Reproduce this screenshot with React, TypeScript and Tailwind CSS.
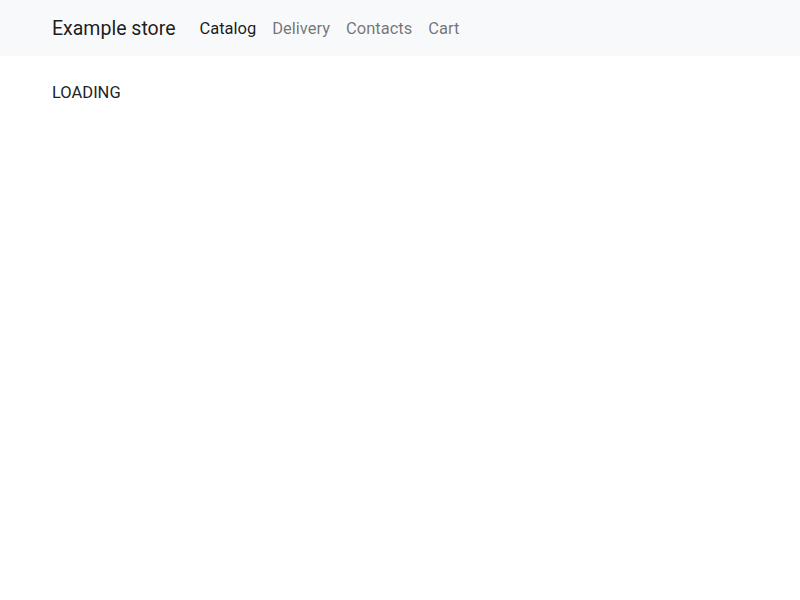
export default function App() {
  return (
    <div className="min-h-[600px] bg-white text-[#212529]" style={{ fontFamily: "Roboto, 'Liberation Sans', sans-serif" }}>
      <nav className="bg-[#f8f9fa] h-[56px] flex items-center">
        <div className="w-[720px] mx-auto px-3 flex items-center pt-[2px]">
          <a className="text-[19.5px] leading-[30px] mr-4 text-black/90">Example store</a>
          <ul className="flex items-center">
            <li><a className="px-2 py-2 block text-[16.5px] leading-6 text-black/90">Catalog</a></li>
            <li><a className="px-2 py-2 block text-[16.5px] leading-6 text-black/55">Delivery</a></li>
            <li><a className="px-2 py-2 block text-[16.5px] leading-6 text-black/55">Contacts</a></li>
            <li><a className="px-2 py-2 block text-[16.5px] leading-6 text-black/55">Cart</a></li>
          </ul>
        </div>
      </nav>
      <div className="w-[720px] mx-auto px-3 mt-[25px]">
        <div className="text-[16.5px] leading-6">LOADING</div>
      </div>
    </div>
  );
}
